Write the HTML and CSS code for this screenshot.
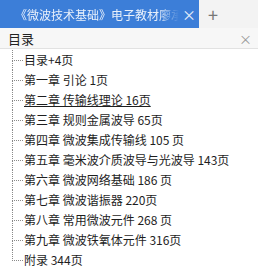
FILE: index.html
```html
<!DOCTYPE html>
<html lang="zh">
<head>
<meta charset="utf-8">
<link rel="stylesheet" href="styles.css">
</head>
<body>
<div class="tabbar">
  <div class="tab">
    <span class="tab-title">《微波技术基础》电子教材廖承恩</span>
    <span class="tab-close">×</span>
  </div>
  <span class="tab-add">+</span>
</div>
<div class="panel-head">
  <span class="panel-title">目录</span>
  <span class="panel-close">×</span>
</div>
<ul class="tree">
  <li>目录+4页</li>
  <li>第一章 引论 1页</li>
  <li class="hover">第二章 传输线理论 16页</li>
  <li>第三章 规则金属波导 65页</li>
  <li>第四章 微波集成传输线 105 页</li>
  <li>第五章 毫米波介质波导与光波导 143页</li>
  <li>第六章 微波网络基础 186 页</li>
  <li>第七章 微波谐振器 220页</li>
  <li>第八章 常用微波元件 268 页</li>
  <li>第九章 微波铁氧体元件 316页</li>
  <li class="last">附录 344页</li>
</ul>
</body>
</html>
```
FILE: styles.css
```css
html, body {
  margin: 0;
  padding: 0;
  background: #ffffff;
  font-family: "Noto Sans CJK SC", "Noto Sans", sans-serif;
  color: #1e1e1e;
  width: 258px;
  height: 268px;
  overflow: hidden;
}
.tabbar {
  height: 28px;
  display: flex;
  align-items: stretch;
  background: #f3f3f3;
}
.tab {
  width: 199px;
  background: #3c7ed8;
  display: flex;
  align-items: center;
  padding-left: 15px;
  box-sizing: border-box;
}
.tab-title {
  flex: 1;
  min-width: 0;
  color: #e8f0fb;
  font-size: 12px;
  white-space: nowrap;
  overflow: hidden;
  -webkit-mask-image: linear-gradient(to right, #000 88%, transparent 100%);
  mask-image: linear-gradient(to right, #000 88%, transparent 100%);
}
.tab-close {
  flex: none;
  width: 20px;
  text-align: center;
  color: #e8f0fb;
  font-size: 14px;
}
.tab-add {
  width: 28px;
  text-align: center;
  line-height: 28px;
  color: #777;
  font-size: 18px;
}
.panel-head {
  height: 20px;
  display: flex;
  align-items: center;
  justify-content: space-between;
  padding: 0 6px 0 8px;
  background: #f7f7f7;
  border-bottom: 1px solid #e2e2e2;
}
.panel-title {
  font-size: 13px;
  color: #222;
}
.panel-close {
  font-size: 13px;
  color: #999;
}
.tree {
  list-style: none;
  margin: 1px 0 0 12px;
  padding: 0;
}
.tree li {
  position: relative;
  height: 20px;
  line-height: 20px;
  padding-left: 12px;
  font-size: 12px;
  white-space: nowrap;
  color: #1e1e1e;
}
.tree li::before {
  content: "";
  position: absolute;
  left: 0;
  top: 0;
  width: 10px;
  height: 10px;
  border-left: 1px dotted #8a8a8a;
  border-bottom: 1px dotted #8a8a8a;
}
.tree li::after {
  content: "";
  position: absolute;
  left: 0;
  top: 10px;
  bottom: 0;
  border-left: 1px dotted #8a8a8a;
}
.tree li.last::after {
  display: none;
}
.tree li.hover {
  text-decoration: underline;
}
```
